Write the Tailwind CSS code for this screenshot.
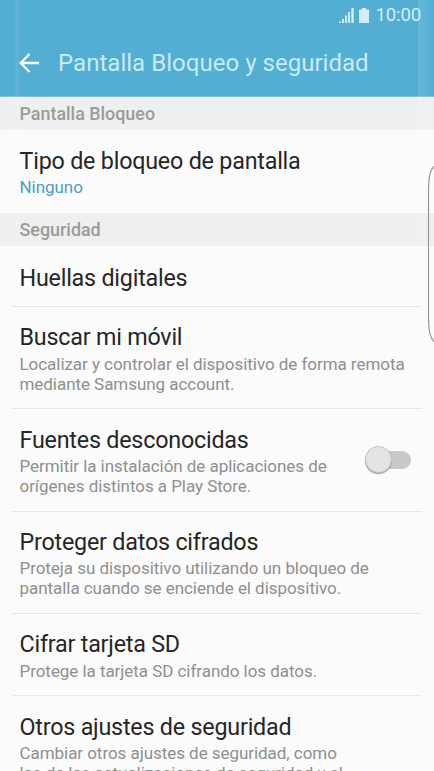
<!DOCTYPE html>
<html lang="es">
<head>
<meta charset="utf-8">
<title>Pantalla Bloqueo y seguridad</title>
<script src="https://cdn.jsdelivr.net/npm/@tailwindcss/browser@4"></script>
</head>
<body class="bg-[#fbfbfb] font-['Roboto',sans-serif]">
<div class="relative flex h-[771px] w-[434px] flex-col overflow-hidden bg-[#fbfbfb] text-[#262626] [&_h2]:text-[23.3px] [&_h2]:leading-[28px] [&_h2]:tracking-[-0.21px] [&_h2]:whitespace-nowrap [&_p]:mt-[2px] [&_p]:text-[17px] [&_p]:leading-[20px] [&_p]:tracking-[-0.05px] [&_p]:whitespace-nowrap [&_p]:text-[#8f8f8f]">
  <header class="h-[97px] shrink-0 border-b border-[#86bdd3] bg-[#52aed3]">
    <div class="flex h-[30px] items-center justify-end pr-[13px] text-[#d3eef9]">
      <svg class="mr-[5px] h-[15px] w-[15px]" viewBox="0 0 15 15" fill="currentColor"><path d="M0 13.500h2V15H0zM3 11h2v4H3zM6 7.500h2V15H6zM9 4h2v11H9zM12.300 0h2.400v15h-2.400z"/></svg>
      <svg class="mr-[6px] h-[15px] w-[10px]" viewBox="0 0 10 15" fill="currentColor"><path d="M3 0h4v1.500h3V15H0V1.500h3z"/></svg>
      <span class="pt-px text-[18.500px] leading-none tracking-[-0.1px]">10:00</span>
    </div>
    <div class="flex h-[66px] items-center pl-[19px]">
      <svg class="h-[20px] w-[20px]" viewBox="0 0 20 20" fill="none" stroke="#fff" stroke-width="2.300"><path d="M10.500 1 1.800 10l8.700 9M2 10h18"/></svg>
      <h1 class="ml-[19px] text-[24px] leading-[28px] tracking-[0.03px] whitespace-nowrap text-[#caeaf8]">Pantalla Bloqueo y seguridad</h1>
    </div>
  </header>
  <div class="flex h-[33px] shrink-0 items-center bg-[#efefef] pt-px pl-[19.500px] text-[17.900px] font-medium text-[#9b9b9b]"><span>Pantalla Bloqueo</span></div>
  <section class="h-[83px] shrink-0 pt-[17px] pl-[19.500px]">
    <h2>Tipo de bloqueo de pantalla</h2>
    <p class="text-[#4b9fc1]!">Ninguno</p>
  </section>
  <div class="flex h-[33px] shrink-0 items-center bg-[#efefef] pt-[2px] pl-[19.500px] text-[17.900px] font-medium text-[#9b9b9b]"><span>Seguridad</span></div>
  <main class="px-3">
    <section class="h-[61px] border-b border-[#e4e4e4] px-[7.500px] pt-[18px]"><h2>Huellas digitales</h2></section>
    <section class="h-[102px] border-b border-[#e4e4e4] px-[7.500px] pt-[16px]">
      <h2>Buscar mi móvil</h2>
      <p class="mt-[3px]!">Localizar y controlar el dispositivo de forma remota<br>mediante Samsung account.</p>
    </section>
    <section class="flex h-[103px] justify-between border-b border-[#e4e4e4] pr-[11px] pl-[7.500px] pt-[17px]">
      <div>
        <h2>Fuentes desconocidas</h2>
        <p>Permitir la instalación de aplicaciones de<br>orígenes distintos a Play Store.</p>
      </div>
      <div class="relative mt-[20px] h-[28px] w-[46px]">
        <div class="absolute top-[5px] right-0 h-[18px] w-[34px] rounded-full bg-[#c8c8c8]"></div>
        <div class="absolute top-0 left-0 h-[27px] w-[27px] rounded-full border border-[#c4c4c4] bg-[#e4e4e4] shadow-[0_1px_1px_#999]"></div>
      </div>
    </section>
    <section class="h-[102px] border-b border-[#e4e4e4] px-[7.500px] pt-[16px]">
      <h2>Proteger datos cifrados</h2>
      <p>Proteja su dispositivo utilizando un bloqueo de<br>pantalla cuando se enciende el dispositivo.</p>
    </section>
    <section class="h-[82px] border-b border-[#e8e8e8] px-[7.500px] pt-[16px]">
      <h2>Cifrar tarjeta SD</h2>
      <p class="mt-[3px]!">Protege la tarjeta SD cifrando los datos.</p>
    </section>
    <section class="px-[7.500px] pt-[17px]">
      <h2>Otros ajustes de seguridad</h2>
      <p>Cambiar otros ajustes de seguridad, como<br>las de las actualizaciones de seguridad y el</p>
    </section>
  </main>
  <div class="absolute top-0 left-[12px] h-full w-[7px] bg-linear-to-r from-white/0 to-white/10"></div>
  <div class="absolute top-0 right-0 h-full w-[16px] bg-linear-to-r from-white/12 to-white/0"></div>
  <svg class="absolute top-[164px] right-0 h-[180px] w-[7px]" viewBox="0 0 7 180" fill="none" stroke="#999" stroke-width="1.200"><path d="M7 2.500C3 6 1.500 13 1.500 26v128c0 13 1.500 20 5.500 23.500"/></svg>
</div>
</body>
</html>
